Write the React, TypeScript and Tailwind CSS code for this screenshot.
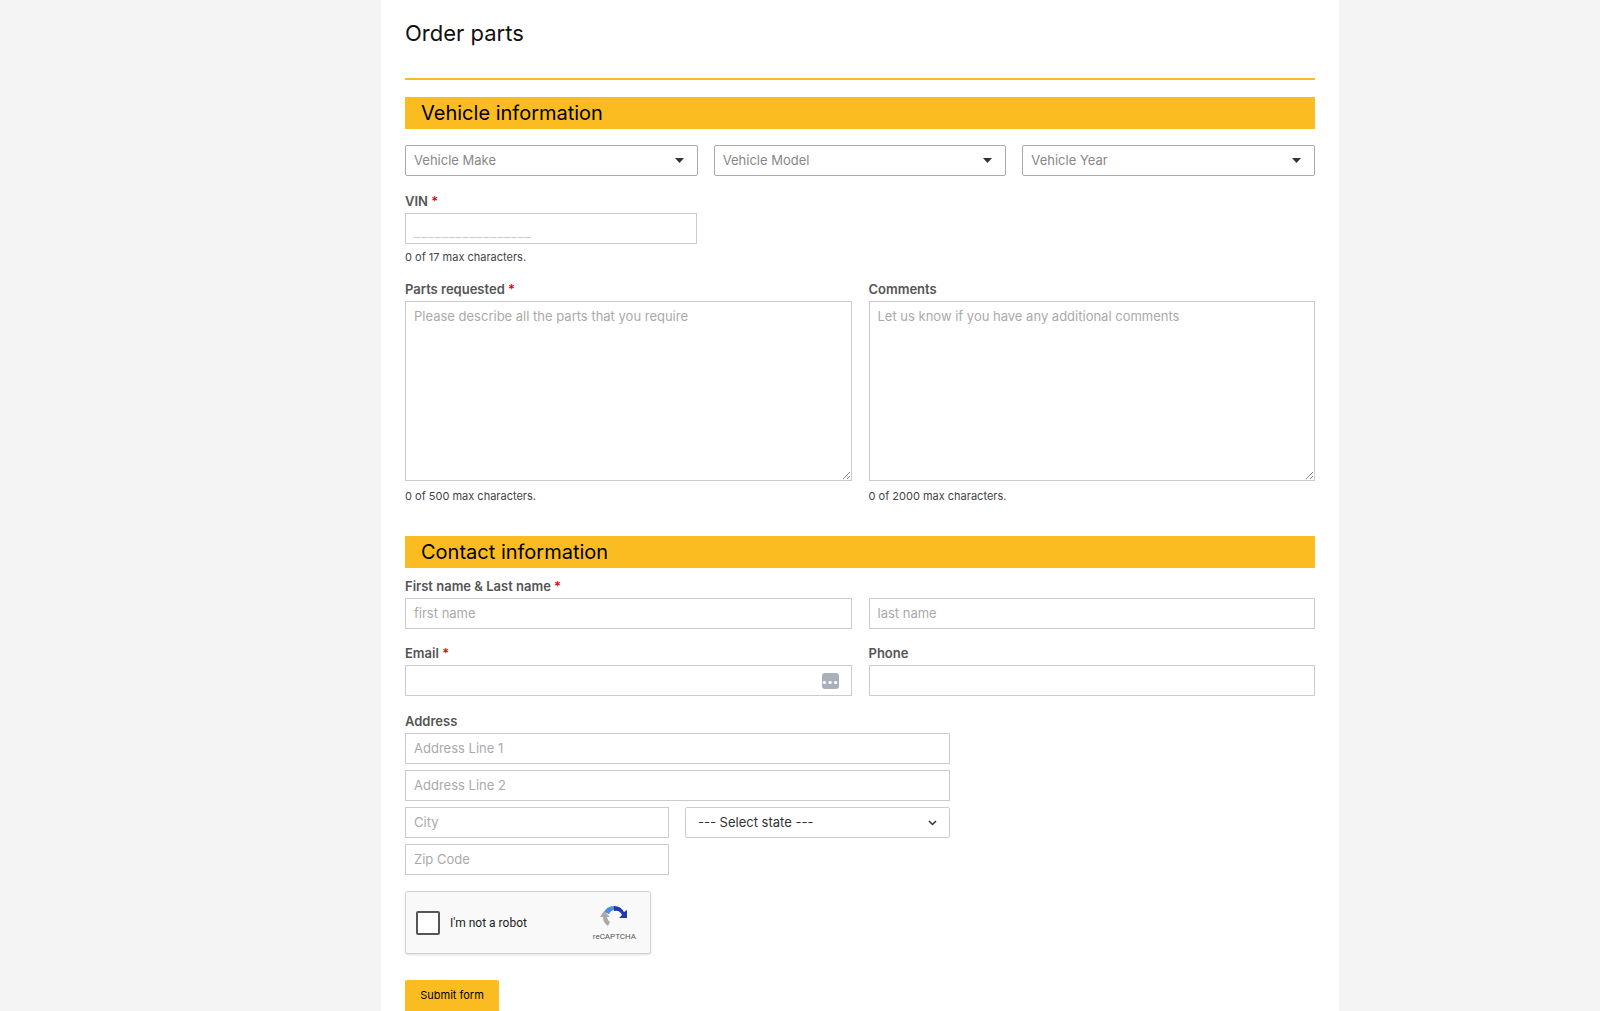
import React from "react";

const font = { fontFamily: "Inter, 'Noto Sans', sans-serif" };

function Caret() {
  return <svg width="9" height="5" viewBox="0 0 9 5"><path d="M0 0h9L4.5 5z" fill="#333" /></svg>;
}

function Sel({ label }: { label: string }) {
  return (
    <div className="flex-1 h-[31px] border border-[#aaa] rounded-[2px] flex items-center justify-between px-2 text-[13px] text-[#888]">
      <span>{label}</span>
      <span className="mr-[5px]"><Caret /></span>
    </div>
  );
}

function Label({ t, req }: { t: string; req?: boolean }) {
  return (
    <div className="text-[13px] font-semibold text-[#555] mb-[4px] leading-[16px]">
      {t}
      {req && <span className="text-red-600"> *</span>}
    </div>
  );
}

function Input({ ph, w, children }: { ph?: string; w?: string; children?: React.ReactNode }) {
  return (
    <div className={`relative h-[31px] border border-[#ccc] flex items-center px-2 text-[13px] text-[#aaa] ${w ?? "w-full"}`}>
      {ph}
      {children}
    </div>
  );
}

function Header({ t }: { t: string }) {
  return <div className="h-[32px] bg-[#fbbc22] px-4 flex items-center text-[20px] text-black">{t}</div>;
}

export default function App() {
  return (
    <div className="w-[1600px] h-[1011px] bg-[#f4f4f4] overflow-hidden" style={font}>
      <div className="ml-[381px] w-[958px] h-full bg-white px-6">
        <div className="pt-[17px] h-[80px] text-[22px] text-[#111] border-b-2 border-[#fbbc22]">Order parts</div>
        <div className="mt-[17px]"><Header t="Vehicle information" /></div>
        <div className="flex gap-4 mt-4">
          <Sel label="Vehicle Make" />
          <Sel label="Vehicle Model" />
          <Sel label="Vehicle Year" />
        </div>
        <div className="mt-[17px]">
          <Label t="VIN" req />
          <Input w="w-[292px]">
            <span className="text-[#ccc] tracking-[1px] mt-[8px]">_________________</span>
          </Input>
          <div className="text-[11px] text-[#444] mt-[5px]">0 of 17 max characters.</div>
        </div>
        <div className="flex gap-[17px] mt-[15px]">
          {[
            ["Parts requested", true, "Please describe all the parts that you require", "0 of 500 max characters."],
            ["Comments", false, "Let us know if you have any additional comments", "0 of 2000 max characters."],
          ].map(([t, r, ph, h]) => (
            <div key={t as string} className="flex-1">
              <Label t={t as string} req={r as boolean} />
              <div className="relative h-[180px] border border-[#ccc] px-2 pt-[5px] text-[13px] text-[#aaa]">
                {ph as string}
                <svg className="absolute right-[1px] bottom-[1px]" width="7" height="7" viewBox="0 0 7 7"><path d="M7 0L0 7M7 4L4 7" stroke="#888" /></svg>
              </div>
              <div className="text-[11px] text-[#444] mt-[7px]">{h as string}</div>
            </div>
          ))}
        </div>
        <div className="mt-[32px]"><Header t="Contact information" /></div>
        <div className="mt-[10px]">
          <Label t="First name & Last name" req />
          <div className="flex gap-[17px]">
            <Input ph="first name" />
            <Input ph="last name" />
          </div>
        </div>
        <div className="flex gap-[17px] mt-[16px]">
          <div className="flex-1">
            <Label t="Email" req />
            <Input>
              <div className="absolute right-[12px] top-[7px] w-[17px] h-[16px] rounded-[3px] bg-[#a9b0bc] flex items-center justify-center text-white text-[10px] leading-none">•••</div>
            </Input>
          </div>
          <div className="flex-1">
            <Label t="Phone" />
            <Input />
          </div>
        </div>
        <div className="mt-[17px] w-[545px] flex flex-col gap-[6px]">
          <Label t="Address" />
          <div className="-mt-[6px]"><Input ph="Address Line 1" /></div>
          <Input ph="Address Line 2" />
          <div className="flex gap-[16px]">
            <Input ph="City" w="w-[264px]" />
            <div className="w-[265px] h-[31px] border border-[#ccc] rounded-[2px] flex items-center justify-between px-3 text-[13px] text-[#333]">
              <span>--- Select state ---</span>
              <svg width="9" height="6" viewBox="0 0 9 6"><path d="M1 1l3.5 3.5L8 1" stroke="#333" strokeWidth="1.5" fill="none" /></svg>
            </div>
          </div>
          <Input ph="Zip Code" w="w-[264px]" />
        </div>
        <div className="mt-[16px] w-[246px] h-[63px] bg-[#f9f9f9] border border-[#d3d3d3] rounded-[3px] shadow-sm flex items-center px-[10px]" style={{ fontFamily: "Roboto, sans-serif" }}>
          <div className="w-[24px] h-[24px] border-2 border-[#555] rounded-[2px] bg-white" />
          <span className="ml-[10px] text-[12px] text-[#222]">I'm not a robot</span>
          <div className="ml-auto mr-[4px] flex flex-col items-center">
            <svg width="28" height="28" viewBox="0 0 28 28">
              <path d="M14 3a11 11 0 0 1 10 6l3-2v8h-8l3-3a7 7 0 0 0-8-4z" fill="#1c3aa9" />
              <path d="M14 3a11 11 0 0 0-10 6l5 2a7 7 0 0 1 5-4z" fill="#4a90e2" />
              <path d="M3 14a11 11 0 0 0 5 9l2-4a7 7 0 0 1-3-5h3l-6-6-4 6z" fill="#aaa" />
            </svg>
            <span className="text-[8px] text-[#555]">reCAPTCHA</span>
          </div>
        </div>
        <div className="mt-[26px] w-[94px] h-[34px] bg-[#fbbc22] rounded-t-[2px] flex items-start pt-[9px] justify-center text-[11px] leading-[13px] text-black">Submit form</div>
      </div>
    </div>
  );
}
